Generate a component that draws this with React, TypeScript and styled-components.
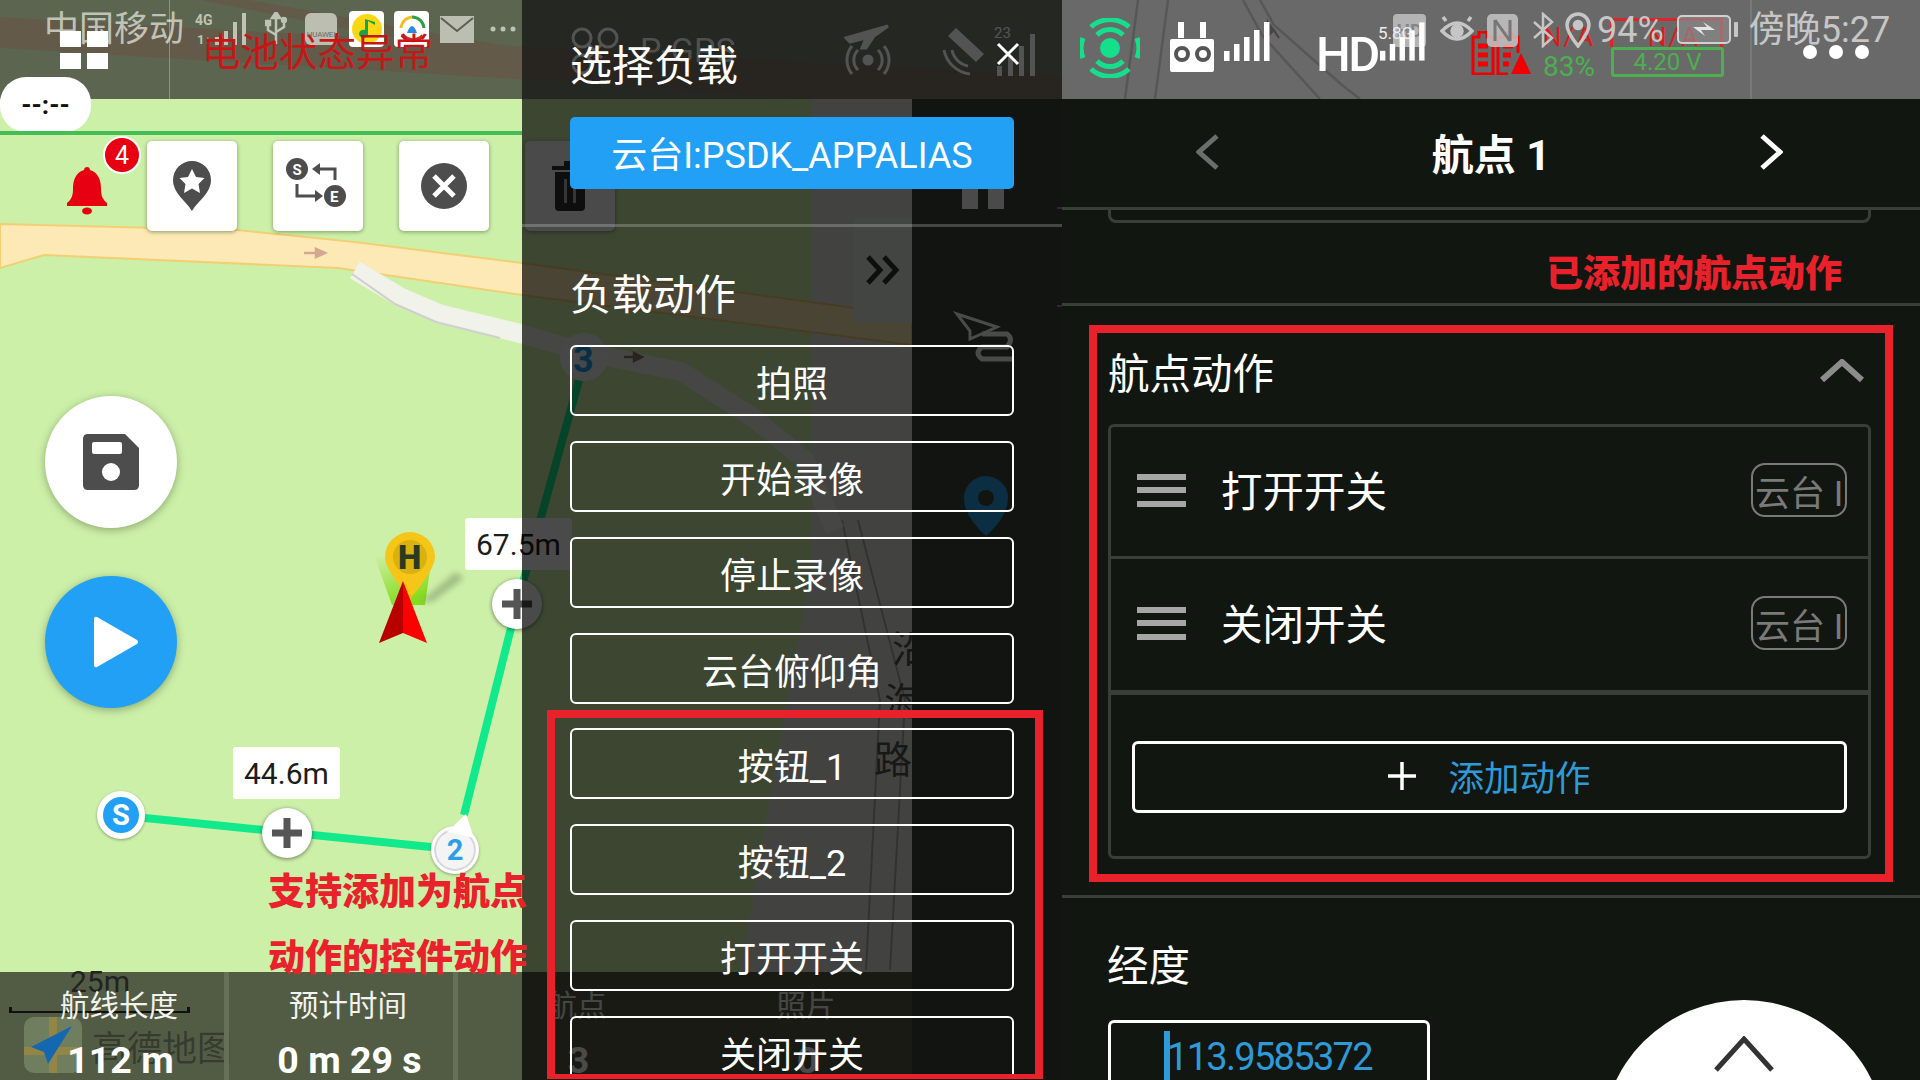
import React from 'react';
import styled, { createGlobalStyle } from 'styled-components';

const GlobalStyle = createGlobalStyle`
  html, body { margin: 0; padding: 0; background: #121611; }
  * { box-sizing: border-box; }
  body { font-family: Roboto, "Noto Sans CJK SC", sans-serif; }
`;

const Screen = styled.div`
  width: 1920px; height: 1080px;
  display: grid; grid-template-columns: 1062px 858px;
  overflow: hidden; position: relative;
`;

/* ---- left: map stage ---- */
const MapStage = styled.div`
  position: relative; height: 1080px; overflow: hidden;
  background: #cdf0a9;
  display: flex; flex-direction: column; justify-content: space-between;
`;
const MapArt = styled.svg`
  position: absolute; left: 0; top: 0;
`;
const MapHeader = styled.div`
  position: relative; height: 99px;
  display: grid; background: rgba(52,52,48,0.74);
  & > * { grid-area: 1 / 1; }
`;
const HeaderRule = styled.i`
  position: absolute; left: 169px; top: 0; width: 1px; height: 99px;
  background: rgba(255,255,255,0.3);
`;
const StatusRow = styled.div`
  display: flex; align-items: center; height: 58px; padding-left: 44px;
  color: #bfc3b6;
`;
const Carrier = styled.span`
  font-size: 35px; line-height: 1;
`;
const Slot = styled.span<{ $ml: number }>`
  display: inline-flex; align-items: center; justify-content: center;
  margin-left: ${p => p.$ml}px; flex: none;
`;
const TopSlot = styled(Slot)`
  position: relative; z-index: 1;
`;
const HuaweiTile = styled.span`
  width: 32px; height: 32px; border-radius: 6px; background: #bcbeb2;
  color: #6a6a62; font-size: 8px; display: flex; align-items: flex-end;
  justify-content: center; padding-bottom: 6px; letter-spacing: -0.2px;
`;
const AppTile = styled.span`
  width: 35px; height: 36px; border-radius: 4px; background: #fff;
  display: flex; align-items: center; justify-content: center;
`;
const AppRow = styled.div`
  display: flex; align-items: flex-start; padding: 31px 0 0 60px;
`;
const GridGlyph = styled.div`
  display: grid; grid-template-columns: 21px 21px; grid-template-rows: 16px 16px;
  gap: 6px; flex: none;
  & > i { background: #fff; }
`;
const BatteryWarn = styled.span`
  color: #c81616; font-size: 38.5px; line-height: 44px; margin-left: 94px;
  white-space: nowrap;
`;
const FaintRow = styled.div`
  display: flex; align-items: center; padding-left: 570px; color: #fff;
`;
const FaintText = styled.span`
  font-size: 34px; margin-left: 20px; opacity: .9;
`;

const TimePill = styled.div`
  position: absolute; left: 0; top: 77px; width: 91px; height: 55px;
  border-radius: 26px; background: #fff; color: #111;
  font-size: 26px; font-weight: 700; display: flex; align-items: center; justify-content: center;
`;
const GreenLine = styled.i`
  position: absolute; left: 0; top: 131px; width: 522px; height: 4px; background: #45bd55;
`;
const ToolRow = styled.div`
  position: absolute; left: 147px; top: 141px; display: flex; gap: 36px;
`;
const ToolButton = styled.div`
  width: 90px; height: 90px; border-radius: 5px; background: #fff;
  box-shadow: 0 1px 4px rgba(60,80,40,.55);
  display: flex; align-items: center; justify-content: center;
`;
const BellWrap = styled.div`
  position: absolute; left: 66px; top: 167px; width: 42px; height: 48px;
`;
const Badge = styled.div`
  position: absolute; left: 103px; top: 136px; width: 38px; height: 38px;
  border-radius: 50%; background: #e60012; border: 2px solid #fff; color: #fff;
  font-size: 25px; display: flex; align-items: center; justify-content: center;
`;
const RoundAction = styled.div<{ $top: number; $blue?: boolean }>`
  position: absolute; left: 45px; top: ${p => p.$top}px;
  width: 132px; height: 132px; border-radius: 50%;
  background: ${p => (p.$blue ? '#21a0f5' : '#fff')};
  box-shadow: 0 2px 8px rgba(60,80,40,.45);
  display: flex; align-items: center; justify-content: center;
  padding-left: ${p => (p.$blue ? 10 : 0)}px;
`;
const DistanceTag = styled.div<{ $left: number; $top: number }>`
  position: absolute; left: ${p => p.$left}px; top: ${p => p.$top}px;
  height: 52px; padding: 0 11px; background: #fff; border-radius: 3px; color: #1c1c1c;
  font-size: 30px; display: flex; align-items: center; white-space: nowrap;
`;
const PlusPin = styled.div<{ $x: number; $y: number }>`
  position: absolute; left: ${p => p.$x - 25}px; top: ${p => p.$y - 25}px;
  width: 50px; height: 50px; border-radius: 50%; background: #fff;
  box-shadow: 0 1px 4px rgba(0,0,0,.5);
  display: flex; align-items: center; justify-content: center;
`;
const StopPin = styled.div<{ $x: number; $y: number; $solid?: boolean }>`
  position: absolute; left: ${p => p.$x - 24}px; top: ${p => p.$y - 24}px;
  width: 48px; height: 48px; border-radius: 50%;
  background: ${p => (p.$solid ? '#21a0f5' : '#f4f4f4')};
  border: ${p => (p.$solid ? '6px solid #fff' : '3px solid #fff')};
  box-shadow: ${p => (p.$solid ? '0 1px 3px rgba(0,0,0,.35)' : 'inset 0 0 0 2px #d6d6d6, 0 1px 3px rgba(0,0,0,.35)')};
  color: ${p => (p.$solid ? '#fff' : '#2a9fe8')};
  font-size: 29px; font-weight: 700;
  display: flex; align-items: center; justify-content: center;
`;
const Note = styled.div<{ $top: number }>`
  position: absolute; left: 268px; top: ${p => p.$top}px; z-index: 5;
  color: #e8212b; font-size: 37px; font-weight: 900; line-height: 44px; white-space: nowrap;
`;

const SideRail = styled.div`
  position: absolute; left: 912px; top: 99px; width: 150px; height: 981px;
  background: #3b4739;
`;
const RailArt = styled.svg`
  position: absolute; left: 0; top: 0;
`;
const RailTile = styled.div`
  position: absolute; left: 853px; top: 217px; width: 59px; height: 106px;
  border-radius: 6px 0 0 6px; background: #e8ece4;
  display: flex; align-items: center; justify-content: center;
`;

const SummaryBar = styled.div`
  position: relative; height: 108px; width: 912px; background: #525c44;
  display: flex;
`;
const ScaleText = styled.span`
  position: absolute; left: 70px; top: -8px; font-size: 30px; color: #222;
`;
const ScaleRule = styled.i`
  position: absolute; left: 9px; top: 35px; width: 181px; height: 6px;
  border: solid #111; border-width: 0 3px 2px;
`;
const AmapMark = styled.svg`
  position: absolute; left: 24px; top: 45px;
`;
const AmapText = styled.span`
  position: absolute; left: 92px; top: 48px; font-size: 35px; color: rgba(30,30,30,.55);
  letter-spacing: 0;
`;
const SummaryCell = styled.div`
  position: relative; width: 229px; padding-left: 14px; flex: none;
  border-right: 5px solid #667058;
  display: flex; flex-direction: column; align-items: center; color: #fff;
  &:nth-child(n+7) { border-right-color: transparent; }
`;
const CellLabel = styled.span`
  font-size: 29.5px; line-height: 34px; margin-top: 17px; color: #f2f2ee;
`;
const CellValue = styled.span`
  font-size: 37.5px; font-weight: 700; line-height: 38px; margin: 18px 0 0 3px; white-space: nowrap;
`;

/* ---- drawer over the map ---- */
const Drawer = styled.div`
  position: absolute; left: 522px; top: 0; width: 540px; height: 1080px;
  background: rgba(0,0,0,.71); color: #fff; overflow: hidden;
  display: flex; flex-direction: column;
`;
const DrawerHead = styled.div`
  height: 99px; flex: none; background: rgba(255,255,255,.05);
  padding: 0 48px; display: flex; align-items: flex-start; justify-content: space-between;
`;
const DrawerTitle = styled.h3`
  margin: 0; font-weight: 400; font-size: 42px; line-height: 48px; color: #fff;
  padding-top: 43px;
`;
const CloseX = styled.svg`
  margin: 42px -6px 0 0;
`;
const PayloadChip = styled.div`
  height: 72px; margin: 18px 48px 0; padding-bottom: 3px; flex: none; border-radius: 5px; background: #21a0f5;
  font-size: 36px; color: #fff; display: flex; align-items: center; justify-content: center;
  white-space: nowrap;
`;
const DrawerRule = styled.i`
  display: block; height: 3px; margin-top: 35px; flex: none; background: rgba(255,255,255,.22);
`;
const SectionTitle = styled.div`
  margin: 44px 48px 0; height: 50px; font-size: 41.5px; line-height: 50px; flex: none;
`;
const ActionList = styled.div`
  margin: 24px 48px 0; display: flex; flex-direction: column; gap: 25px; flex: none;
`;
const ActionButton = styled.div`
  height: 71px; flex: none; border: 2.5px solid #fff; border-radius: 6px; color: #fff;
  font-size: 36px; display: flex; align-items: center; justify-content: center;
`;
const CustomActions = styled.div`
  margin: 6px 19px 0 25px; height: 369px; flex: none; overflow: hidden;
  border: 8px solid #e8212b; border-bottom-width: 5px;
  padding: 10px 21px 0 15px;
  display: flex; flex-direction: column; gap: 25px;
`;

/* ---- right panel ---- */
const RightPanel = styled.div`
  position: relative; height: 1080px; background: #121611; color: #fff;
  display: flex; flex-direction: column; overflow: hidden;
`;
const TopStrip = styled.div`
  position: relative; height: 99px; flex: none; background: #696969; display: grid;
  & > * { grid-area: 1 / 1; }
`;
const StripArt = styled.svg`
  position: absolute; left: 0; top: 0;
`;
const PhoneRow = styled.div`
  position: relative; height: 60px; display: flex; align-items: center; padding-left: 331px; color: #c6c6c6;
`;
const PhoneText = styled.span<{ $ml: number }>`
  margin-left: ${p => p.$ml}px; font-size: 36px; line-height: 1; white-space: nowrap;
`;
const GrayTile = styled.span`
  width: 33px; height: 33px; border-radius: 4px; background: #b4b4b4; color: #858585;
  font-size: 19px; font-weight: 700; display: flex; align-items: center; justify-content: center;
`;
const DroneRow = styled.div`
  position: relative; display: flex; align-items: flex-start; padding: 22px 0 0 18px;
`;
const RadarGlyph = styled.svg`
  margin-top: -4px; flex: none;
`;
const HdLabel = styled.span`
  color: #fff; font-size: 49px; font-weight: 500; line-height: 50px; margin: 8px 0 0 45px;
  letter-spacing: -2.5px; width: 57px; flex: none;
`;
const BandLabel = styled.span`
  position: absolute; left: 316px; top: 23px; z-index: 2; color: #eee; font-size: 17px; line-height: 1.2;
`;
const PowerBlock = styled.div`
  margin-left: 45px; margin-top: 9px; display: flex; align-items: flex-start; flex: none;
`;
const PowerPct = styled.span`
  color: #4caf50; font-size: 28px; line-height: 30px; margin: 21px 0 0 10px; width: 47px; flex: none;
`;
const VoltBox = styled.span`
  width: 113px; height: 30px; border: 3px solid #4caf50; margin: 16px 0 0 21px; border-radius: 3px;
  color: #4caf50; font-size: 24px; display: flex; align-items: center; justify-content: center;
`;
const RedFlag = styled.span<{ $left: number }>`
  position: absolute; left: ${p => p.$left}px; top: 22px; color: #e01a1a; font-size: 26px; line-height: 1.2;
  letter-spacing: 2px;
`;
const RedFrame = styled.i`
  position: absolute; left: 548px; top: 18px; width: 113px; height: 29px;
  border: 3px solid #d8262a; border-bottom: 0;
`;
const MoreDots = styled.div`
  position: absolute; left: 741px; top: 45px; display: flex; gap: 12px;
  & > i { width: 14px; height: 14px; border-radius: 50%; background: #fff; }
`;
const NavBar = styled.div`
  height: 111px; flex: none; border-bottom: 3px solid #3a3e39;
  padding: 0 137px 3px 134px; display: flex; align-items: center; justify-content: space-between;
`;
const NavTitle = styled.span`
  font-size: 42px; font-weight: 700; color: #fff; margin-left: 3px;
`;
const ClippedCard = styled.div`
  height: 13px; flex: none; margin: 0 49px 0 46px;
  border: 3px solid #3a3e39; border-top: 0; border-radius: 0 0 8px 8px;
`;
const RedCaption = styled.div`
  height: 83px; flex: none; padding: 30px 78px 0 0; text-align: right;
  color: #e8212b; font-size: 37px; font-weight: 900; line-height: 44px;
  border-bottom: 3px solid #3a3e39;
`;
const ActionSection = styled.section`
  margin: 19px 27px 0; height: 557px; flex: none; border: 8px solid #e8212b;
  padding: 0 14px 0 11px; display: flex; flex-direction: column;
`;
const SectionHead = styled.div`
  height: 91px; flex: none; display: flex; align-items: center; justify-content: space-between;
  padding: 0 7px 15px 0; font-size: 41.5px;
`;
const WaypointList = styled.div`
  height: 435px; flex: none; width: 763px;
  border: 3px solid #3a3e39; border-radius: 6px; display: flex; flex-direction: column;
`;
const WaypointRow = styled.div<{ $thick?: boolean }>`
  height: ${p => (p.$thick ? 136 : 132)}px; flex: none;
  border-bottom: ${p => (p.$thick ? 5 : 3)}px solid #3a3e39;
  padding: 0 21px 3px 26px; display: flex; align-items: center;
`;
const Grip = styled.div`
  width: 49px; height: 33px; flex: none; display: flex; flex-direction: column; justify-content: space-between;
  & > i { height: 6px; background: #a6a6a6; }
`;
const RowName = styled.span`
  margin-left: 35px; font-size: 41.5px; flex: 1; padding-bottom: 3px;
`;
const GimbalTag = styled.span`
  width: 96px; height: 54px; flex: none; border: 2px solid #7a7a7a; border-radius: 14px;
  color: #7a7a7a; font-size: 35px; overflow: hidden; white-space: nowrap;
  display: flex; align-items: center; padding-left: 2px;
`;
const AddWrap = styled.div`
  flex: 1; padding: 46px 21px 0;
`;
const AddButton = styled.div`
  height: 72px; border: 3px solid #fff; border-radius: 6px;
  display: flex; align-items: center; justify-content: center; gap: 32px;
  color: #2f9ad8; font-size: 35.5px; padding-bottom: 3px;
`;
const FieldRule = styled.i`
  display: block; height: 3px; flex: none; margin-top: 13px; background: #3a3e39;
`;
const FieldTitle = styled.div`
  margin: 44px 0 0 45px; font-size: 41.5px; line-height: 50px; flex: none;
`;
const LongitudeInput = styled.div`
  margin: 28px 0 0 46px; width: 322px; height: 100px; flex: none;
  border: 3px solid #fff; border-radius: 6px;
  padding: 8px 0 0 53px; display: flex; align-items: flex-start;
  color: #2f9ad8; font-size: 38px; line-height: 52px; letter-spacing: -1.7px;
`;
const Caret = styled.i`
  width: 6px; height: 60px; background: #2f9ad8; margin-right: -3px; flex: none;
`;
const ScrollDial = styled.div`
  position: absolute; left: 540px; top: 1000px; width: 284px; height: 284px; border-radius: 50%;
  background: #fff; display: flex; justify-content: center; padding-top: 36px; overflow: hidden;
`;

const Bars = ({ w = 48, h = 39 }: { w?: number; h?: number }) => (
  <svg width={w} height={h} viewBox="0 0 48 39">
    {[10, 17, 24, 31, 39].map((bh, i) => (
      <rect key={i} x={i * 10 + 1} y={39 - bh} width="5.5" height={bh} fill="#fff" />
    ))}
  </svg>
);

const Chevron = ({ dir, color, w = 26, h = 36, sw = 4 }: { dir: 'l' | 'r' | 'u'; color: string; w?: number; h?: number; sw?: number }) => {
  const pts = dir === 'l' ? `${w - 3},2 3,${h / 2} ${w - 3},${h - 2}` : dir === 'r' ? `3,2 ${w - 3},${h / 2} 3,${h - 2}` : `2,${h - 3} ${w / 2},3 ${w - 2},${h - 3}`;
  return (
    <svg width={w} height={h}>
      <polyline points={pts} fill="none" stroke={color} strokeWidth={sw} />
    </svg>
  );
};

const Plus = ({ color = '#555', s = 30, sw = 7 }: { color?: string; s?: number; sw?: number }) => (
  <svg width={s} height={s}>
    <path d={`M${s / 2} 0V${s}M0 ${s / 2}H${s}`} stroke={color} strokeWidth={sw} />
  </svg>
);

const gimbalActions = ['拍照', '开始录像', '停止录像', '云台俯仰角'];
const customActions = ['按钮_1', '按钮_2', '打开开关', '关闭开关'];
const waypointActions = ['打开开关', '关闭开关'];

export default function App() {
  return (
    <>
      <GlobalStyle />
      <Screen>
        <MapStage>
          <MapArt width="1062" height="1080" viewBox="0 0 1062 1080">
            <polygon points="812,99 812,563 782,730 739,980 912,980 912,99" fill="#e4e8dc" />
            <path d="M842 520 L880 700 L866 970 M858 520 L905 700 L890 970" stroke="#aaa" strokeWidth="2" fill="none" />
            <path d="M0 17 L530 47 L1062 75 V99 H800 L530 80 L0 48Z" fill="#e6c592" />
            <path d="M250 0 L530 50 L530 65 L200 0Z" fill="#e6c592" />
            <path d="M0 224 L237 230 L355 242 L522 263 L855 308 L912 318 L912 345 L522 295 L338 268 L44 255 L0 268Z" fill="#fde9b6" stroke="#f2cf72" strokeWidth="2" />
            <path d="M355 270 L400 297 L440 314 L522 334 L584 352 L682 372 L752 417 L805 460 L835 530" fill="none" stroke="#f1f2ea" strokeWidth="19" />
            <path d="M352 274 L395 304 L436 322 L500 338" fill="none" stroke="#cfcfcf" strokeWidth="2" />
            <path d="M304 253 H322 M316 249 L325 253 L316 257Z" stroke="#d2a894" strokeWidth="2.5" fill="#d2a894" />
            <path d="M624 357 H638 M634 353 L642 357 L634 361Z" stroke="#8f7b6a" strokeWidth="2.5" fill="#8f7b6a" />
            <g fontFamily="Noto Sans CJK SC" fontSize="38" fill="#555">
              <text x="892" y="662">沿</text>
              <text x="884" y="715">海</text>
              <text x="874" y="773">路</text>
            </g>
            <path d="M145 818 L431 847" stroke="#12e98c" strokeWidth="8" />
            <path d="M464 815 L517 604 L579 380" stroke="#12e98c" strokeWidth="8" fill="none" />
            <circle cx="584" cy="357" r="24" fill="#f5f5f5" />
            <text x="573" y="372" fontFamily="Roboto" fontWeight="700" fontSize="36" fill="#21a0f5">3</text>
          </MapArt>

          <RailTile>
            <svg width="36" height="32" viewBox="0 0 36 32">
              <path d="M3 3L15 16L3 29M19 3L31 16L19 29" fill="none" stroke="#333" strokeWidth="5" />
            </svg>
          </RailTile>

          <SideRail>
            <RailArt width="150" height="981">
              <rect x="50" y="70" width="16" height="40" fill="#fff" />
              <rect x="76" y="70" width="16" height="40" fill="#fff" />
              <path d="M45 215 L85 228 L58 240 L58 232Z" fill="none" stroke="#fff" strokeWidth="3" />
              <path d="M70 235 H95 Q102 240 95 248 H70 Q62 254 70 260 H100" fill="none" stroke="#fff" strokeWidth="5" />
              <path d="M52 399 a22 22 0 0 1 44 0 q0 18 -22 38 q-22 -20 -22 -38z" fill="#2a9fe8" />
              <circle cx="74" cy="399" r="8" fill="#3b4739" />
              <rect x="145" y="108" width="5" height="2" fill="#999" />
              <rect x="145" y="206" width="5" height="2" fill="#999" />
            </RailArt>
          </SideRail>

          <MapHeader>
            <HeaderRule />
            <StatusRow>
              <Carrier>中国移动</Carrier>
              <Slot $ml={11}>
                <svg width="52" height="36" viewBox="0 0 52 36">
                  <text x="0" y="14" fontSize="14" fontWeight="700" fontFamily="Roboto" fill="#bfc3b6">4G</text>
                  <text x="2" y="33" fontSize="13" fontWeight="700" fontFamily="Roboto" fill="#bfc3b6">1↓</text>
                  <rect x="20" y="26" width="4" height="8" fill="#bfc3b6" />
                  <rect x="29" y="20" width="4" height="14" fill="#bfc3b6" />
                  <rect x="38" y="11" width="4" height="23" fill="#bfc3b6" />
                  <rect x="47" y="2" width="4" height="32" fill="#bfc3b6" />
                </svg>
              </Slot>
              <Slot $ml={18}>
                <svg width="22" height="34" viewBox="0 0 22 34" fill="none" stroke="#bfc3b6" strokeWidth="2.5">
                  <path d="M11 3V32M3 12V18L11 23M19 9V15L11 20" />
                  <path d="M11 0L7 6H15Z" fill="#bfc3b6" />
                  <rect x="1" y="9" width="4" height="4" fill="#bfc3b6" />
                  <circle cx="19" cy="8" r="2" fill="#bfc3b6" />
                </svg>
              </Slot>
              <Slot $ml={18}>
                <HuaweiTile>HUAWEI</HuaweiTile>
              </Slot>
              <Slot $ml={12}>
                <AppTile>
                  <svg width="32" height="32" viewBox="0 0 32 32">
                    <circle cx="16" cy="16" r="15" fill="#fcd813" />
                    <path d="M17 8 V21 a4.5 4 0 1 1 -3 -4 V6 L24 9 V12Z" fill="#11a44a" />
                  </svg>
                </AppTile>
              </Slot>
              <Slot $ml={10}>
                <AppTile>
                  <svg width="32" height="32" viewBox="0 0 32 32" fill="none">
                    <path d="M5 15 A12 12 0 0 1 16 4" stroke="#f0c020" strokeWidth="3" />
                    <path d="M16 4 A12 12 0 0 1 28 15" stroke="#2f9e44" strokeWidth="3" />
                    <path d="M6 22 Q16 32 27 23" stroke="#d62828" strokeWidth="4" />
                    <path d="M11 20 Q16 6 21 20Z" fill="#2a8ce0" />
                  </svg>
                </AppTile>
              </Slot>
              <Slot $ml={11}>
                <svg width="34" height="27" viewBox="0 0 34 27">
                  <rect width="34" height="27" fill="#bcbeb2" />
                  <path d="M1 2L17 15L33 2" fill="none" stroke="#5a5f50" strokeWidth="2" />
                </svg>
              </Slot>
              <Slot $ml={16}>
                <svg width="26" height="6">
                  <circle cx="3" cy="3" r="2.5" fill="#bfc3b6" />
                  <circle cx="13" cy="3" r="2.5" fill="#bfc3b6" />
                  <circle cx="23" cy="3" r="2.5" fill="#bfc3b6" />
                </svg>
              </Slot>
            </StatusRow>
            <AppRow>
              <GridGlyph><i /><i /><i /><i /></GridGlyph>
              <BatteryWarn>电池状态异常</BatteryWarn>
            </AppRow>
            <FaintRow>
              <svg width="50" height="48" viewBox="0 0 50 48" fill="none" stroke="#fff" strokeWidth="3">
                <circle cx="12" cy="12" r="9" />
                <circle cx="38" cy="12" r="9" />
                <path d="M18 18L32 32M32 18L18 32" />
                <circle cx="12" cy="38" r="9" />
              </svg>
              <FaintText>P-GPS</FaintText>
              <Slot $ml={108}>
                <svg width="48" height="56" viewBox="0 0 48 56" fill="none" stroke="#fff" strokeWidth="3">
                  <path d="M2 16 L44 4 L30 14 L22 26 L18 26 L22 16 L6 20Z" fill="#fff" />
                  <circle cx="24" cy="38" r="4" fill="#fff" />
                  <path d="M14 28 a14 14 0 0 0 0 20 M34 28 a14 14 0 0 1 0 20" />
                  <path d="M8 24 a22 22 0 0 0 0 28 M40 24 a22 22 0 0 1 0 28" />
                </svg>
              </Slot>
              <Slot $ml={50}>
                <svg width="100" height="60" viewBox="0 0 100 60" fill="none">
                  <path d="M14 8 L42 34 L34 42 L6 16Z" fill="#fff" />
                  <path d="M2 30 a30 30 0 0 0 26 24 M10 30 a20 20 0 0 0 16 16" stroke="#fff" strokeWidth="3" />
                  <rect x="55" y="46" width="5" height="10" fill="#fff" />
                  <rect x="66" y="36" width="5" height="20" fill="#fff" />
                  <rect x="77" y="26" width="5" height="30" fill="#fff" />
                  <rect x="88" y="14" width="5" height="42" fill="#fff" />
                  <text x="52" y="18" fontFamily="Roboto" fontSize="15" fill="#fff">23</text>
                </svg>
              </Slot>
            </FaintRow>
          </MapHeader>

          <TimePill>--:--</TimePill>
          <GreenLine />

          <BellWrap>
            <svg width="42" height="48" viewBox="0 0 42 48" fill="#e60012">
              <path d="M21 0c-2 0-3 1.5-3 3C9 6 7 14 7 22c0 7-2 11-6 14v3h40v-3c-4-3-6-7-6-14 0-8-2-16-11-19 0-1.500-1-3-3-3z" />
              <ellipse cx="21" cy="44" rx="5" ry="3.500" />
            </svg>
          </BellWrap>
          <Badge>4</Badge>

          <ToolRow>
            <ToolButton>
              <svg width="40" height="50" viewBox="0 0 40 50">
                <path d="M20 50 C14 40 1 32 1 19 a19 19 0 0 1 38 0 C39 32 26 40 20 50Z" fill="#4d4d4d" />
                <path d="M20 8l4 8 8.500 1-6 6 1.500 9-8-4.500-8 4.500 1.500-9-6-6 8.500-1z" fill="#fff" />
              </svg>
            </ToolButton>
            <ToolButton>
              <svg width="66" height="60" viewBox="0 0 66 60" fill="none">
                <circle cx="12" cy="13" r="11" fill="#4d4d4d" />
                <text x="7.500" y="18.500" fontFamily="Roboto" fontWeight="700" fontSize="15" fill="#fff">S</text>
                <path d="M32 13H50V24" stroke="#4d4d4d" strokeWidth="3" />
                <path d="M27 13L35 7V19Z" fill="#4d4d4d" />
                <path d="M12 28V40H32" stroke="#4d4d4d" strokeWidth="3" />
                <path d="M38 40L30 34V46Z" fill="#4d4d4d" />
                <circle cx="50" cy="40" r="11" fill="#4d4d4d" />
                <text x="45" y="45.500" fontFamily="Roboto" fontWeight="700" fontSize="15" fill="#fff">E</text>
              </svg>
            </ToolButton>
            <ToolButton>
              <svg width="46" height="46" viewBox="0 0 46 46">
                <circle cx="23" cy="23" r="23" fill="#4d4d4d" />
                <path d="M13 13L33 33M33 13L13 33" stroke="#fff" strokeWidth="5" />
              </svg>
            </ToolButton>
            <ToolButton>
              <svg width="36" height="50" viewBox="0 0 36 50" fill="#333">
                <rect x="0" y="5" width="36" height="4" />
                <rect x="12" y="0" width="12" height="5" />
                <path d="M3 11H33V46Q33 50 29 50H7Q3 50 3 46Z" />
                <rect x="12" y="18" width="3" height="24" fill="#bbb" />
                <rect x="21" y="18" width="3" height="24" fill="#bbb" />
              </svg>
            </ToolButton>
          </ToolRow>

          <RoundAction $top={396}>
            <svg width="56" height="56" viewBox="0 0 56 56">
              <path d="M5 0H42L56 14V51Q56 56 51 56H5Q0 56 0 51V5Q0 0 5 0Z" fill="#4d4d4d" />
              <rect x="9" y="8" width="30" height="12" rx="2" fill="#fff" />
              <circle cx="28" cy="38" r="9" fill="#fff" />
            </svg>
          </RoundAction>
          <RoundAction $top={576} $blue>
            <svg width="46" height="52" viewBox="0 0 46 52">
              <path d="M1 3 Q1 0 4 1 L44 24 Q46 26 44 28 L4 51 Q1 52 1 49Z" fill="#fff" />
            </svg>
          </RoundAction>

          <DistanceTag $left={465} $top={518}>67.5m</DistanceTag>
          <PlusPin $x={517} $y={604}><Plus /></PlusPin>
          <DistanceTag $left={233} $top={747}>44.6m</DistanceTag>
          <PlusPin $x={287} $y={833}><Plus /></PlusPin>
          <StopPin $x={121} $y={815} $solid>S</StopPin>
          <StopPin $x={455} $y={850}>2</StopPin>
          <RailArt width="530" height="900" viewBox="0 0 530 900">
            <defs>
              <linearGradient id="coneGlow" x1="0" y1="0" x2="0.4" y2="1">
                <stop offset="0" stopColor="#cdf0a9" />
                <stop offset="1" stopColor="#86dc1e" />
              </linearGradient>
              <filter id="softShade" x="-30%" y="-30%" width="160%" height="160%">
                <feGaussianBlur stdDeviation="3" />
              </filter>
            </defs>
            <path d="M447 832 L466 814 L474 838Z" fill="#fff" />
            <path d="M374 555 L392 605 L425 605 L430 570Z" fill="url(#coneGlow)" />
            <path d="M420 602 L456 572 L464 578 L432 602Z" fill="#7d9a68" opacity=".6" filter="url(#softShade)" />
            <path d="M385 557 a25 25 0 0 1 50 0 q0 12 -25 42 q-25 -30 -25 -42z" fill="#f5c518" />
            <circle cx="410" cy="557" r="17" fill="#d9b20f" />
            <text x="398" y="569" fontFamily="Roboto" fontWeight="900" fontSize="33" fill="#2a3a20">H</text>
            <path d="M403 581 L379 643 L403 633Z" fill="#b80000" />
            <path d="M403 581 L427 643 L403 633Z" fill="#ff0000" />
          </RailArt>

          <SummaryBar>
            <ScaleText>25m</ScaleText>
            <ScaleRule />
            <AmapMark width="58" height="56" viewBox="0 0 58 56">
              <g opacity=".55">
                <rect width="58" height="56" rx="10" fill="#8a9a78" />
                <rect x="25" width="8" height="56" fill="#c8a848" />
                <rect y="30" width="58" height="8" fill="#c8a848" />
              </g>
              <path d="M48 9 L7 30 L20 35 L24 47Z" fill="#1567b0" />
            </AmapMark>
            <AmapText>高德地图</AmapText>
            <SummaryCell>
              <CellLabel>航线长度</CellLabel>
              <CellValue>112 m</CellValue>
            </SummaryCell>
            <SummaryCell>
              <CellLabel>预计时间</CellLabel>
              <CellValue>0 m 29 s</CellValue>
            </SummaryCell>
            <SummaryCell>
              <CellLabel>航点</CellLabel>
              <CellValue>3</CellValue>
            </SummaryCell>
            <SummaryCell>
              <CellLabel>照片</CellLabel>
              <CellValue>0</CellValue>
            </SummaryCell>
          </SummaryBar>

          <Drawer>
            <DrawerHead>
              <DrawerTitle>选择负载</DrawerTitle>
              <CloseX width="24" height="24">
                <path d="M2 2L22 22M22 2L2 22" stroke="#fff" strokeWidth="3" />
              </CloseX>
            </DrawerHead>
            <PayloadChip>云台I:PSDK_APPALIAS</PayloadChip>
            <DrawerRule />
            <SectionTitle>负载动作</SectionTitle>
            <ActionList>
              {gimbalActions.map(a => <ActionButton key={a}>{a}</ActionButton>)}
            </ActionList>
            <CustomActions>
              {customActions.map(a => <ActionButton key={a}>{a}</ActionButton>)}
            </CustomActions>
          </Drawer>

          <Note $top={871}>支持添加为航点</Note>
          <Note $top={937}>动作的控件动作</Note>
        </MapStage>

        <RightPanel>
          <TopStrip>
            <StripArt width="858" height="99" fill="none" stroke="#575757" strokeWidth="2.5">
              <path d="M76 0L63 99M106 0L93 99" />
              <path d="M181 0L200 35L258 99M198 0L212 25L280 85L298 99" />
              <path d="M206 22L217 38L212 30L206 36Z" fill="#4a4444" stroke="#4a4444" strokeWidth="2" />
              <path d="M689 0V99" stroke="#8a8a8a" strokeWidth="1" />
            </StripArt>
            <DroneRow>
              <RadarGlyph width="60" height="60" viewBox="0 0 60 60" fill="none" stroke="#14e08c" strokeWidth="5">
                <circle cx="30" cy="30" r="10" fill="#14e08c" stroke="none" />
                <path d="M17 17 A18 18 0 0 1 43 17M17 43 A18 18 0 0 0 43 43" />
                <path d="M11 9 A28 28 0 0 1 49 9M11 51 A28 28 0 0 0 49 51" />
                <path d="M3 20 A28 28 0 0 0 3 40M57 20 A28 28 0 0 1 57 40" />
              </RadarGlyph>
              <Slot $ml={30}>
                <svg width="44" height="50" viewBox="0 0 44 50">
                  <rect x="8" y="0" width="6" height="16" fill="#fff" />
                  <rect x="30" y="0" width="6" height="16" fill="#fff" />
                  <rect x="0" y="17" width="44" height="33" rx="2" fill="#fff" />
                  <circle cx="12" cy="32" r="6" fill="none" stroke="#555" strokeWidth="4" />
                  <circle cx="33" cy="32" r="6" fill="none" stroke="#555" strokeWidth="4" />
                </svg>
              </Slot>
              <Slot $ml={9}><Bars /></Slot>
              <HdLabel>HD</HdLabel>
              <TopSlot $ml={6}><Bars w={47} /></TopSlot>
              <BandLabel>5.8G</BandLabel>
              <PowerBlock>
                <svg width="62" height="44" viewBox="0 0 62 44" fill="none" stroke="#f00000" strokeWidth="3">
                  <path d="M2 6H8V1H16V6H22V43H2Z" />
                  <path d="M27 6H33V1H41V6H47V22M37 43H27V6" />
                  <path d="M7 15H17M7 24H17M7 33H17M32 15H42M32 24H40M32 33H38" strokeWidth="5" />
                  <path d="M50 22L60 43H40Z" fill="#f00000" stroke="none" />
                </svg>
                <PowerPct>83%</PowerPct>
                <VoltBox>4.20 V</VoltBox>
              </PowerBlock>
            </DroneRow>
            <RedFlag $left={481}>N/A</RedFlag>
            <RedFlag $left={586}>N/A</RedFlag>
            <RedFrame />
            <PhoneRow>
              <GrayTile>HD</GrayTile>
              <Slot $ml={14}>
                <svg width="34" height="30" viewBox="0 0 34 30" fill="none" stroke="#c6c6c6" strokeWidth="3.500">
                  <path d="M2 16 Q17 0 32 16 Q17 32 2 16Z" />
                  <circle cx="17" cy="16" r="5" fill="#c6c6c6" />
                  <path d="M6 6L3 2M28 6L31 2" />
                </svg>
              </Slot>
              <Slot $ml={13}>
                <svg width="31" height="33" viewBox="0 0 31 33">
                  <rect width="31" height="33" rx="5" fill="#c6c6c6" fillOpacity=".85" />
                  <path d="M8 6V27M23 6V27M8 6L23 27" stroke="#777" strokeWidth="3" fill="none" />
                </svg>
              </Slot>
              <Slot $ml={14}>
                <svg width="22" height="36" viewBox="0 0 22 36" fill="none" stroke="#c6c6c6" strokeWidth="2.500">
                  <path d="M2 10L20 26L11 34V2L20 10L2 26" />
                </svg>
              </Slot>
              <Slot $ml={11}>
                <svg width="26" height="36" viewBox="0 0 26 36" fill="none" stroke="#c6c6c6" strokeWidth="3.500">
                  <path d="M13 34 Q2 20 2 13 a11 11 0 0 1 22 0 Q24 20 13 34Z" />
                  <circle cx="13" cy="13" r="3.500" fill="#c6c6c6" />
                </svg>
              </Slot>
              <PhoneText $ml={6}>94%</PhoneText>
              <Slot $ml={13}>
                <svg width="62" height="30" viewBox="0 0 62 30">
                  <rect x="1" y="1" width="52" height="27" rx="4" fill="#8a8a8a" fillOpacity=".7" stroke="#d0d0d0" strokeWidth="2" />
                  <rect x="57" y="7" width="4" height="15" rx="1" fill="#c6c6c6" />
                  <path d="M16 12H30L26 7L38 15H24L28 21Z" fill="#e4e4e4" />
                </svg>
              </Slot>
              <PhoneText $ml={10}>傍晚5:27</PhoneText>
            </PhoneRow>
            <MoreDots><i /><i /><i /></MoreDots>
          </TopStrip>

          <NavBar>
            <Chevron dir="l" color="#6b6f6b" w={24} h={36} sw={5} />
            <NavTitle>航点 1</NavTitle>
            <Chevron dir="r" color="#fff" w={24} h={36} sw={5} />
          </NavBar>
          <ClippedCard />
          <RedCaption>已添加的航点动作</RedCaption>

          <ActionSection>
            <SectionHead>
              航点动作
              <Chevron dir="u" color="#8c8c8c" w={44} h={24} sw={6} />
            </SectionHead>
            <WaypointList>
              {waypointActions.map((name, i) => (
                <WaypointRow key={name} $thick={i === 1}>
                  <Grip><i /><i /><i /></Grip>
                  <RowName>{name}</RowName>
                  <GimbalTag>云台 I</GimbalTag>
                </WaypointRow>
              ))}
              <AddWrap>
                <AddButton>
                  <Plus color="#fff" s={28} sw={3.500} />
                  添加动作
                </AddButton>
              </AddWrap>
            </WaypointList>
          </ActionSection>

          <FieldRule />
          <FieldTitle>经度</FieldTitle>
          <LongitudeInput>
            <Caret />
            113.9585372
          </LongitudeInput>

          <ScrollDial>
            <svg width="62" height="36" viewBox="0 0 62 36">
              <polyline points="3,34 31,3 59,34" fill="none" stroke="#333" strokeWidth="5" />
            </svg>
          </ScrollDial>
        </RightPanel>
      </Screen>
    </>
  );
}
